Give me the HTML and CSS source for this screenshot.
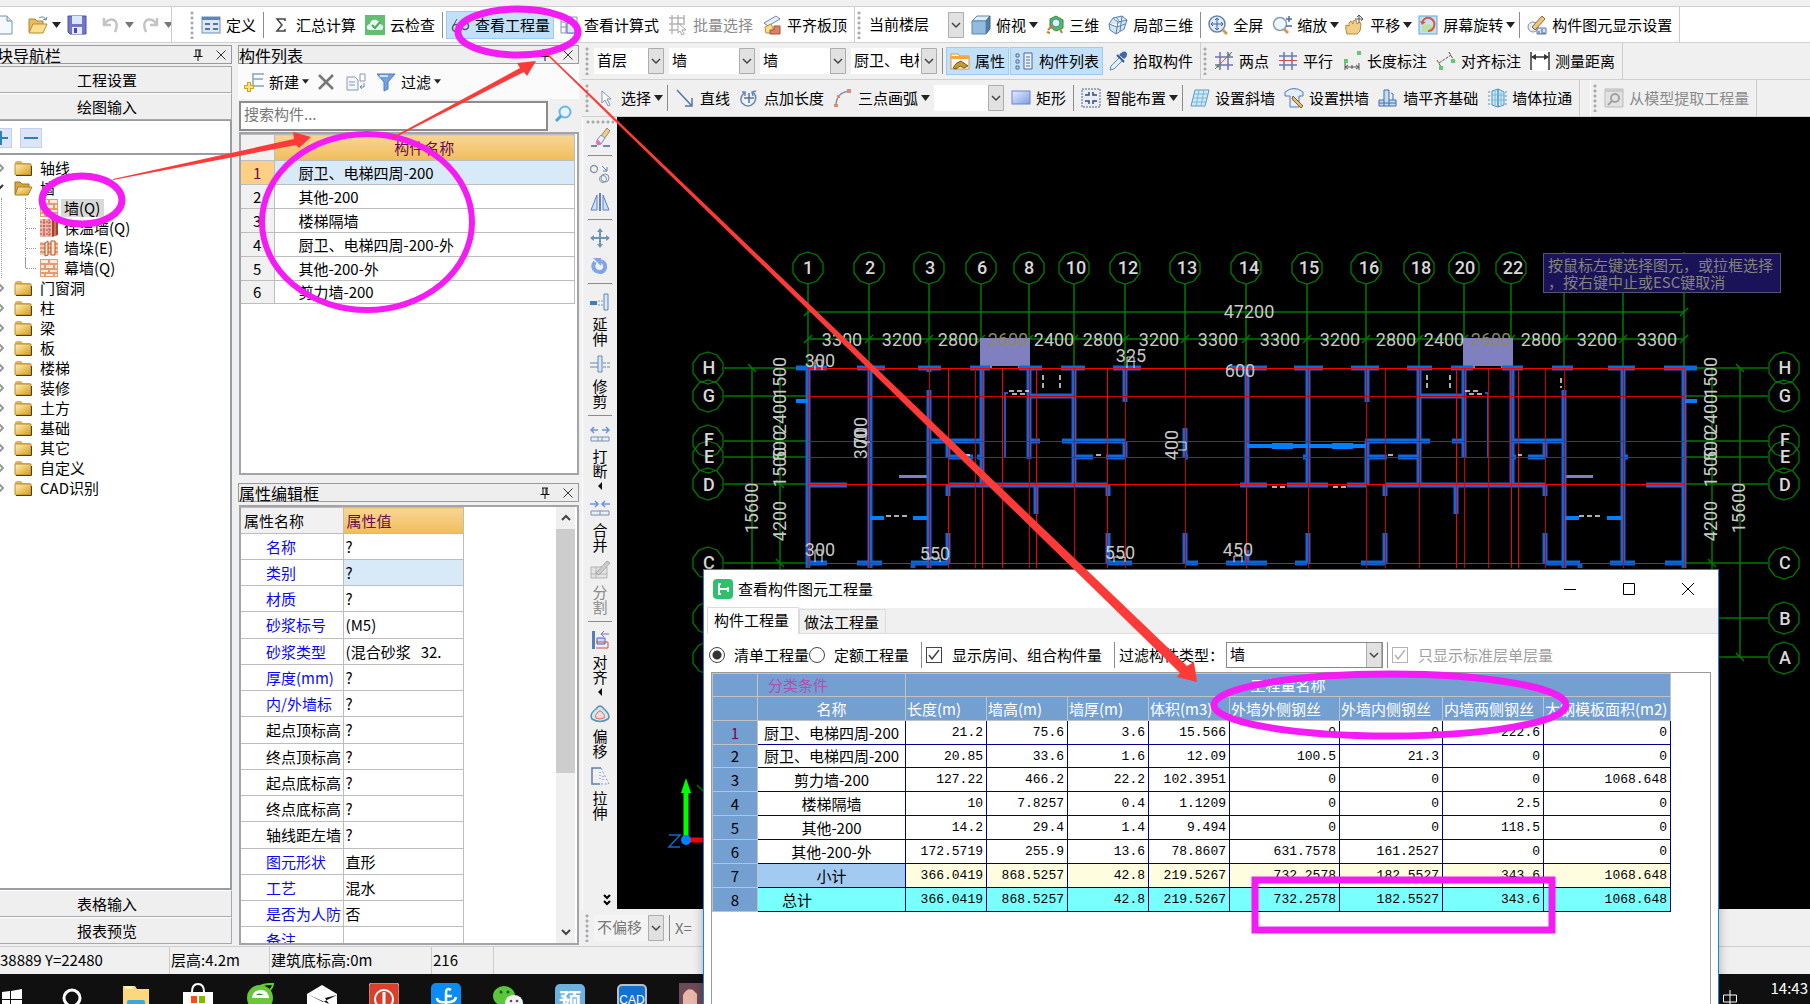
FILE: index.html
```html
<!DOCTYPE html>
<html lang="zh-CN">
<head>
  <meta charset="UTF-8" />
  <meta name="viewport" content="width=device-width, initial-scale=1.0" />
  <title>查看构件图元工程量</title>
  <link rel="stylesheet" href="styles.css">
</head>
<body>
  <!-- icon sprite -->
  <svg class="sprite" aria-hidden="true">
    <defs>
      <linearGradient id="gold" x1="0" y1="0" x2="1" y2="1"><stop offset="0" stop-color="#fff3b8"/><stop offset="1" stop-color="#d69a14"/></linearGradient>
      <linearGradient id="steel" x1="0" y1="0" x2="1" y2="1"><stop offset="0" stop-color="#e3eeff"/><stop offset="1" stop-color="#7f9fe0"/></linearGradient>
    </defs>
    <symbol id="folder" viewBox="0 0 18 16"><path d="M1 3q0-2 2-2h4l2 2h7v11H1z" fill="#e3b757"/><path d="M1 4h16v10q0 1-1 1H2q-1 0-1-1z" fill="url(#gold)" stroke="#b98a2c"/><path d="M2 15.500h15.500V6" stroke="#4d4020" fill="none"/></symbol>
    <symbol id="folder-open" viewBox="0 0 18 16"><path d="M1 14V2h5l2 2h7v3" fill="#d9a73c" stroke="#9a7424"/><path d="M4 7h14l-4 8H1z" fill="url(#gold)" stroke="#a87c28"/></symbol>
    <symbol id="brick" viewBox="0 0 18 18"><rect width="18" height="18" fill="#e59a72"/><path d="M1 1h7v3H1zM10 1h7v3h-7zM1 6h3v3H1zM6 6h7v3H6zM15 6h2v3h-2zM1 11h7v2H1zM10 11h7v2h-7zM1 15h3v2H1zM6 15h7v2H6zM15 15h2v2h-2z" fill="#fdebdc"/></symbol>
    <symbol id="brick-red" viewBox="0 0 18 18"><rect width="12" height="18" fill="#efb7aa"/><path d="M0 3h12M0 7h12M0 11h12M0 15h12M4 0v18M9 0v18" stroke="#b8483c" stroke-dasharray="2 1"/><path d="M12 0l6 2v14l-6 2z" fill="#a8412c"/><path d="M15 1v16" stroke="#e8a58e"/></symbol>
    <symbol id="brick-pier" viewBox="0 0 18 18"><path d="M0 3h18v13H0z" fill="#f6c9ac"/><path d="M0 5h18M0 9h18M0 13h18" stroke="#c8683c"/><path d="M5 4l3-2v14l-3 1zM11 2h4v14h-4z" fill="#fdebdc" stroke="#b5501f"/></symbol>
    <symbol id="pin" viewBox="0 0 12 12"><path d="M3 1h6M4 1v6M8 1v6M7 1v6M1.500 7.500h9M6 8v4" stroke="#111" fill="none"/></symbol>
    <symbol id="close" viewBox="0 0 12 12"><path d="M1.500 1.500l9 9M10.500 1.500l-9 9" stroke="#333" fill="none"/></symbol>
    <symbol id="caret" viewBox="0 0 9 6"><path d="M0 0h9L4.500 6z" fill="currentColor"/></symbol>
    <symbol id="doc" viewBox="0 0 20 20"><path d="M2 1h9l5 5v13H2z" fill="#f4f9ff" stroke="#7790ab"/><path d="M11 1v5h5" fill="#cfe0f5" stroke="#7790ab"/></symbol>
    <symbol id="open" viewBox="0 0 20 20"><path d="M1 17V4h6l2 2h6v3" fill="#e7bd60" stroke="#a9842f"/><path d="M5 9h14l-4 9H1z" fill="#ffdf8e" stroke="#b78b33"/><path d="M11 3q5-3 7 2m0 0l-3-1m3 1l1-3" stroke="#5b87b8" fill="none"/></symbol>
    <symbol id="save" viewBox="0 0 20 20"><path d="M1 1h18v18H3l-2-2z" fill="#7276c9" stroke="#4e50a3"/><path d="M5 1h10v8H5z" fill="#dbe6fb"/><path d="M5 12h10v7H5z" fill="#e8ecf5"/><path d="M7 13h3v5H7z" fill="#474a98"/></symbol>
    <symbol id="undo" viewBox="0 0 20 20"><path d="M3 3v7h7M3 10q4-7 10-5 5 3 1 12" stroke="#c4c4c4" stroke-width="2.500" fill="none"/></symbol>
    <symbol id="redo" viewBox="0 0 20 20"><path d="M17 3v7h-7M17 10q-4-7-10-5-5 3-1 12" stroke="#c4c4c4" stroke-width="2.500" fill="none"/></symbol>
    <symbol id="define" viewBox="0 0 20 20"><rect x="1" y="2" width="18" height="16" fill="#dce8f6" stroke="#6f8fb5"/><path d="M1 2h18v3H1z" fill="#5a87c2"/><path d="M4 9h5M4 14h5M12 9h5M12 14h5" stroke="#54779f" stroke-width="2"/></symbol>
    <symbol id="sum" viewBox="0 0 20 20"><path d="M14 6V4H6l5 6-5 6h8v-2" stroke="#444" stroke-width="1.500" fill="none"/></symbol>
    <symbol id="cloud" viewBox="0 0 20 20"><rect width="20" height="20" fill="#63bd72"/><path d="M4 15q-3-1-2-4 1-2 3-2 1-5 6-4 4 1 4 4 4 1 3 4 0 2-2 2z" fill="#e9f8ec"/><path d="M7 10l3 3 5-6" stroke="#49a95b" stroke-width="2" fill="none"/></symbol>
    <symbol id="glasses" viewBox="0 0 20 20"><circle cx="6" cy="13" r="3.500" fill="none" stroke="#555" stroke-width="1.500"/><circle cx="15" cy="11" r="3.500" fill="none" stroke="#555" stroke-width="1.500"/><path d="M3 11l4-7M18 9l-2-5" stroke="#555"/></symbol>
    <symbol id="sheet" viewBox="0 0 20 20"><path d="M2 2h16v16H2zM2 7h16M2 12h16M7 2v16M13 2v16" fill="#f5f7fb" stroke="#8895b5"/><path d="M8 8h8v10H8z" fill="#dfe7f7" stroke="#5f6fae"/></symbol>
    <symbol id="batch" viewBox="0 0 20 20"><path d="M1 3h16M1 9h16M1 15h9M4 0v19M10 0v10M16 0v8" stroke="#b5b5b5" fill="none" stroke-width="1.500"/><path d="M10 8l8 7-4 0 2 4-2 1-2-4-2 2z" fill="#fff" stroke="#a5a5a5"/></symbol>
    <symbol id="slab" viewBox="0 0 20 20"><path d="M2 8l12-7 4 3-12 7z" fill="#e8effa" stroke="#7186ad"/><path d="M3 12l6-3 2 4v5H4z" fill="#ffe08a" stroke="#b98a2c"/><path d="M8 19v-4h4v-4h6v8z" fill="#d9826b" stroke="#a4503c"/></symbol>
    <symbol id="cube" viewBox="0 0 20 20"><path d="M1 6l5-5h13l-4 5z" fill="#deeffa" stroke="#5f87a8"/><path d="M15 6l4-5v13l-4 5z" fill="#4d7faa" stroke="#44698a"/><path d="M1 6h14v13H1z" fill="#91bcdd" stroke="#5f87a8"/></symbol>
    <symbol id="view3d" viewBox="0 0 20 20"><path d="M6 4l6-3 7 4v8l-7 3-6-4z" fill="#4fbf63" stroke="#33873f"/><circle cx="12" cy="8" r="4" fill="#d8f3ff" stroke="#4b7f9c"/><path d="M9 10l-5 5M3 17l3 1M16 14l2 4" stroke="#c07c38" stroke-width="2"/></symbol>
    <symbol id="part3d" viewBox="0 0 20 20"><path d="M1 9l4-6 9-2 5 4-3 9-8 5-6-4zM5 3l5 4 9-2M10 7l-2 12M1 9l8 3 8-3M8 2l4 5M14 1l-2 15" fill="#d3e7f8" stroke="#5582ad"/></symbol>
    <symbol id="fullscreen" viewBox="0 0 20 20"><circle cx="9" cy="9" r="8" fill="#dfeafb" stroke="#6882ad" stroke-width="1.500"/><path d="M9 3v12M3 9h12M7 5l2-2 2 2M7 13l2 2 2-2M5 7L3 9l2 2M13 7l2 2-2 2" stroke="#41619c" fill="none"/><path d="M15 15l4 4" stroke="#d69a52" stroke-width="3"/></symbol>
    <symbol id="zoom" viewBox="0 0 20 20"><circle cx="8" cy="9" r="6.500" fill="#edf5ff" stroke="#8d9bb3" stroke-width="1.500"/><path d="M12 14l4 4" stroke="#d69a52" stroke-width="3"/><path d="M17 1v6M14 4h6M14 11h6" stroke="#4b6ba5" stroke-width="1.500"/></symbol>
    <symbol id="hand" viewBox="0 0 20 20"><path d="M2 19q-2-5-1-9l3 1V8l2-2 2 3V6l3-1 1 4 3-2 1 2-1 7-3 3z" fill="#efcf88" stroke="#b48a3e"/><path d="M14 0v8M10 4h8M12 2l2-2 2 2M16 2l2 2-2 2" stroke="#555" fill="none"/></symbol>
    <symbol id="rotate-screen" viewBox="0 0 20 20"><rect x="1" y="1" width="18" height="18" fill="#bfe2f5" stroke="#64a7d3"/><path d="M4 11l5-2 7 2v6H4z" fill="#bfe19b"/><path d="M4 8q2-6 8-5 6 3 4 9-2 4-6 4" stroke="#e35248" stroke-width="2" fill="none"/><path d="M2 6l2 4 4-3z" fill="#e35248"/></symbol>
    <symbol id="display" viewBox="0 0 20 20"><circle cx="6" cy="12" r="5" fill="#e7edf8" stroke="#7f90b0"/><path d="M5 12L15 1l3 3L8 15z" fill="#f0c77c" stroke="#8a6530"/><path d="M10 19v-6h9v6z" fill="#d7e3f5" stroke="#5d76a5"/><path d="M12 19v-3M15 19v-5M17 19v-2" stroke="#3f5f98"/></symbol>
    <symbol id="props" viewBox="0 0 20 20"><path d="M1 3h7l2 2h9v13H1z" fill="#fff" stroke="#dc9530"/><path d="M1 5h18v3H1z" fill="#f5a742"/><path d="M3 17q3-6 8-7l7 5-4 2-4-2-4 3z" fill="#c99a34" stroke="#6f5520"/></symbol>
    <symbol id="list" viewBox="0 0 20 20"><path d="M2 3h3v3H2zM2 9h3v3H2zM2 15h3v3H2z" fill="none" stroke="#556b92"/><path d="M10 2h8v16h-8z" fill="#eef4ff" stroke="#4a64a0"/><path d="M12 6h4M12 9h4M12 12h4M12 15h4" stroke="#4a64a0"/></symbol>
    <symbol id="picker" viewBox="0 0 20 20"><path d="M11 4q4-5 7-3 3 3-2 7z" fill="#3f6aa6"/><path d="M9 4l7 7" stroke="#2e5490" stroke-width="2"/><path d="M11 7l-8 8-1 4 4-1 8-8z" fill="#dff0ff" stroke="#5d86b3"/></symbol>
    <symbol id="axis2" viewBox="0 0 20 20"><path d="M6 1v18M14 1v18M1 6h18M1 14h18" stroke="#6f74b4" stroke-width="1.500"/><path d="M1 18L18 1" stroke="#d24a42"/><circle cx="4" cy="15" r="1.500" fill="#2fa344"/><circle cx="15" cy="4" r="1.500" fill="#2fa344"/></symbol>
    <symbol id="axisp" viewBox="0 0 20 20"><path d="M6 1v18M14 1v18M1 5h18M1 14h18" stroke="#6f74b4" stroke-width="1.500"/><path d="M1 9.500h18" stroke="#d24a42"/></symbol>
    <symbol id="dimlen" viewBox="0 0 20 20"><path d="M3 12v7M17 12v7M3 16h14M6 14l-3 2 3 2M14 14l3 2-3 2M10 14v4" stroke="#555" fill="none"/><path d="M2 8h4v4H2zM15 0h4v4h-4z" fill="#63ca6b"/></symbol>
    <symbol id="dimalign" viewBox="0 0 20 20"><path d="M1 9l4 7M13 1l4 7M3 12L15 4" stroke="#555" stroke-dasharray="3 1" fill="none"/><path d="M3 15h4v4H3zM15 8h4v4h-4z" fill="#63ca6b"/></symbol>
    <symbol id="measure" viewBox="0 0 20 20"><path d="M0 0h20v20H0z" fill="#fff"/><path d="M1 1v18M19 1v18M2 6h16" stroke="#333" stroke-width="1.500"/><path d="M1 6l5-3v6zM19 6l-5-3v6z" fill="#333"/></symbol>
    <symbol id="cursor" viewBox="0 0 20 20"><path d="M6 3v12l3-3 3 6 2-1-3-6h4z" fill="#fff" stroke="#8093b3"/></symbol>
    <symbol id="line" viewBox="0 0 20 20"><path d="M2 2l14 15M17 10v8h-7" stroke="#5674a8" stroke-width="1.500" fill="none"/></symbol>
    <symbol id="ptlen" viewBox="0 0 20 20"><path d="M5 5q-5 5-2 10 6 6 12 0 4-6-1-11M3 4l3 0v4M17 3l-4 1 1 4" stroke="#6787b5" stroke-width="1.500" fill="none"/><path d="M10 5v10M5 10h10" stroke="#5674a8" stroke-width="1.500"/></symbol>
    <symbol id="arc" viewBox="0 0 20 20"><path d="M3 18Q3 4 17 3" stroke="#7d93b9" stroke-width="1.500" fill="none"/><path d="M1 16h4v3H1zM4 7h3v3H4zM14 1h4v4h-4z" fill="#e28a6f"/></symbol>
    <symbol id="rect" viewBox="0 0 20 20"><rect x="1" y="3" width="18" height="13" fill="url(#steel)" stroke="#6d83d0"/></symbol>
    <symbol id="smart" viewBox="0 0 20 20"><rect x="1" y="1" width="18" height="18" fill="#e9edf6" stroke="#5b6480" stroke-dasharray="2 1"/><path d="M4 7h4V4M16 7h-4V4M4 13h4v3M16 13h-4v3" stroke="#324a78" stroke-width="1.500" fill="none"/></symbol>
    <symbol id="slant" viewBox="0 0 20 20"><path d="M5 2h14l-4 16H1z" fill="#cdeafa" stroke="#5a97bf"/><path d="M4 6h14M3 10h14M2 14h14M9 2L6 18M14 2l-3 16" stroke="#7ab5d8"/></symbol>
    <symbol id="arch" viewBox="0 0 20 20"><path d="M1 8V4q9-7 18 0v4h-4v11H6V8z" fill="#e4effb" stroke="#4c7ab8"/><path d="M9 8l10 10-2 2L8 11z" fill="#e7bd70" stroke="#77602e"/></symbol>
    <symbol id="found" viewBox="0 0 20 20"><path d="M6 2h5v10h7v6H1v-6h5z" fill="#c5dcf5" stroke="#3f6eae"/><path d="M13 5l2 1v6M1 15h17M6 12v6M11 12v6" stroke="#3f6eae" fill="none"/></symbol>
    <symbol id="through" viewBox="0 0 20 20"><path d="M5 3l6-2v18l-6-2zM11 1l6 3v13l-6 2z" fill="#cdeafa" stroke="#4b91c4"/><path d="M2 3v14M19 3v14" stroke="#4b91c4" stroke-dasharray="2 2"/><path d="M8 3v14M14 4v13M5 7h12M5 12h12" stroke="#7ab5d8"/></symbol>
    <symbol id="model" viewBox="0 0 20 20"><path d="M1 1h18v18H1z" fill="#e2e2e2" stroke="#bbb"/><path d="M1 1h18v3H1z" fill="#c9c9c9"/><circle cx="11" cy="10" r="4" fill="none" stroke="#a2a2a2" stroke-width="2"/><path d="M8 13l-4 4" stroke="#a2a2a2" stroke-width="2"/></symbol>
    <symbol id="new" viewBox="0 0 20 20"><path d="M9 1v13M9 2h11M9 7h10M9 14h11" stroke="#8ba2c4" stroke-width="1.500" fill="none"/><path d="M5 10v10M0 15h10" stroke="#d2a128" stroke-width="4"/><path d="M5 11v8M1 15h8" stroke="#ffe27a" stroke-width="2"/></symbol>
    <symbol id="del" viewBox="0 0 20 20"><path d="M3 3l14 14M17 3L3 17" stroke="#777" stroke-width="2.500"/></symbol>
    <symbol id="copydoc" viewBox="0 0 20 20"><path d="M1 5h8l3 3v10H1z" fill="#f3f6fb" stroke="#8898b5"/><path d="M3 10h6M3 13h6" stroke="#8898b5"/><path d="M14 2h5v7h-5z" fill="#fff" stroke="#8898b5"/><path d="M18 11v4h-4m2-2l-2 2 2 2" stroke="#6a84c9" fill="none"/></symbol>
    <symbol id="funnel" viewBox="0 0 20 20"><path d="M1 2h18l-7 8v7l-4 2v-9z" fill="#74a0de" stroke="#4b7cc2"/><path d="M4 4h8" stroke="#cfe2fb" stroke-width="2"/></symbol>
    <symbol id="search" viewBox="0 0 20 20"><circle cx="12" cy="8" r="5.500" fill="#e6f4ff" stroke="#6cb4e8" stroke-width="2"/><path d="M8 12l-5 5" stroke="#4ba3e3" stroke-width="3"/></symbol>
    <symbol id="eraser" viewBox="0 0 20 20"><path d="M11 8l6-8 3 3-6 8z" fill="#f2cf7b" stroke="#94886c"/><path d="M7 12l4-5 4 3-4 6q-4 1-4-4z" fill="#e9eefb" stroke="#7c8fb5"/><path d="M7 12q3 0 4 4-2 2-4 1-2-2 0-5" fill="#e573b6"/><path d="M1 18h6M13 18h7" stroke="#6d8bb0" stroke-width="2"/></symbol>
    <symbol id="copy" viewBox="0 0 20 20"><circle cx="4" cy="5" r="3.500" fill="none" stroke="#8295b0" stroke-width="1.300"/><circle cx="13" cy="15" r="3.500" fill="none" stroke="#8295b0"/><circle cx="15" cy="14" r="4" fill="none" stroke="#8295b0"/><path d="M12 2l5 5m0-4v4h-4" stroke="#5d82ad" fill="none"/></symbol>
    <symbol id="mirror" viewBox="0 0 20 20"><path d="M1 18L7 3v15zM19 18L13 3v15z" fill="#cfe0ff" stroke="#5d7fc0"/><path d="M10 1v18" stroke="#5d7fc0" stroke-width="2"/></symbol>
    <symbol id="move" viewBox="0 0 20 20"><path d="M10 2v16M2 10h16" stroke="#7192b7" stroke-width="2"/><path d="M7 4l3-4 3 4zM7 16l3 4 3-4zM4 7l-4 3 4 3zM16 7l4 3-4 3z" fill="#7192b7"/></symbol>
    <symbol id="rotate" viewBox="0 0 20 20"><path d="M5 6q-4 5 1 9 7 3 9-3 1-5-4-7" stroke="#7fa5ec" stroke-width="4" fill="none"/><path d="M3 2h8v8z" fill="#7fa5ec"/></symbol>
    <symbol id="extend" viewBox="0 0 20 20"><path d="M0 9h7v4H0z" fill="#3e7bc0"/><path d="M8 9h6M8 13h6" stroke="#7d98ba" stroke-dasharray="2 1"/><path d="M14 2h4v16h-4z" fill="#d9e8fa" stroke="#6587b2"/></symbol>
    <symbol id="trim" viewBox="0 0 20 20"><path d="M0 9h8M0 13h8" stroke="#6587b2"/><path d="M8 2h4v16H8z" fill="#d9e8fa" stroke="#6587b2"/><path d="M13 9h7M13 13h7" stroke="#6587b2" stroke-dasharray="3 1"/></symbol>
    <symbol id="break" viewBox="0 0 20 20"><path d="M1 6h7M19 6h-7M4 3L1 6l3 3M16 3l3 3-3 3" stroke="#6d92dd" stroke-width="1.500" fill="none"/><path d="M1 13h18v4H1zM8 13v4M12 13v4" fill="#e8f0fa" stroke="#7a91ae"/></symbol>
    <symbol id="merge" viewBox="0 0 20 20"><path d="M0 6h7M20 6h-7M5 3l3 3-3 3M15 3l-3 3 3 3" stroke="#6d92dd" stroke-width="1.500" fill="none"/><path d="M1 13h18v4H1zM10 13v4" fill="#e8f0fa" stroke="#7a91ae"/></symbol>
    <symbol id="split" viewBox="0 0 20 20"><path d="M1 7h16v11H1zM1 14h16M6 7v11" fill="#e4e4e4" stroke="#b3b3b3"/><path d="M6 13L17 1l3 2L9 15z" fill="#ccc" stroke="#a8a8a8"/></symbol>
    <symbol id="align" viewBox="0 0 20 20"><path d="M2 1h3v18H2z" fill="#5680b5"/><path d="M7 8h8v6H7z" fill="#cfdcff" stroke="#4a5fd0"/><path d="M6 12h12v6H6" fill="none" stroke="#d2504c"/><path d="M19 4h-8m3-3l-3 3 3 3" stroke="#7a6fc4" fill="none"/></symbol>
    <symbol id="offset" viewBox="0 0 20 20"><path d="M6 5q4-6 8 0 7 6 4 10-8 5-16 0-3-5 4-10z" fill="#cfe8f5" stroke="#5b8fb5" stroke-width="1.500"/><path d="M8 8q2-3 4 0 4 4 2 6-4 2-8 0-2-2 2-6z" fill="#ffd9d2" stroke="#e0665c"/></symbol>
    <symbol id="stretch" viewBox="0 0 20 20"><path d="M11 2H2v16h8" fill="none" stroke="#5d7fb0" stroke-width="1.500"/><path d="M11 2l8 16H10" stroke="#7b9bd0" fill="none" stroke-dasharray="2 2"/><path d="M10 6v9M13 10v6" stroke="#5d7fb0" stroke-dasharray="1 2"/></symbol>
    <symbol id="bubble" viewBox="-17 -17 34 34"><path d="M0-16L9-13 15-5V5L9 13 0 16-9 13-15 5V-5L-9-13z" fill="none" stroke="#007a00" stroke-width="1.300"/></symbol>
  </svg>

  <div class="app">
    <header class="topbar">
      <div class="tb quick">
        <button class="mini" aria-label="新建工程"><svg class="ic"><use href="#doc"/></svg></button>
        <button class="mini" aria-label="打开"><svg class="ic"><use href="#open"/></svg><svg class="caret"><use href="#caret"/></svg></button>
        <button class="mini" aria-label="保存"><svg class="ic"><use href="#save"/></svg></button>
        <i class="sep"></i>
        <button class="mini" aria-label="撤销"><svg class="ic"><use href="#undo"/></svg><svg class="caret dim-caret"><use href="#caret"/></svg></button>
        <button class="mini" aria-label="恢复"><svg class="ic"><use href="#redo"/></svg><svg class="caret dim-caret"><use href="#caret"/></svg></button>
      </div>
      <div class="tb">
        <i class="grip"></i>
        <button><svg class="ic"><use href="#define"/></svg>定义</button>
        <i class="sep"></i>
        <button><svg class="ic"><use href="#sum"/></svg>汇总计算</button>
        <button><svg class="ic"><use href="#cloud"/></svg>云检查</button>
        <i class="sep"></i>
        <button class="on"><svg class="ic"><use href="#glasses"/></svg>查看工程量</button>
        <button><svg class="ic"><use href="#sheet"/></svg>查看计算式</button>
        <button disabled><svg class="ic"><use href="#batch"/></svg>批量选择</button>
        <button><svg class="ic"><use href="#slab"/></svg>平齐板顶</button>
      </div>
      <div class="tb">
        <i class="grip"></i>
        <select class="combo w98" aria-label="显示楼层"><option>当前楼层</option></select>
        <button><svg class="ic"><use href="#cube"/></svg>俯视<svg class="caret"><use href="#caret"/></svg></button>
        <button><svg class="ic"><use href="#view3d"/></svg>三维</button>
        <button><svg class="ic"><use href="#part3d"/></svg>局部三维</button>
        <i class="sep"></i>
        <button><svg class="ic"><use href="#fullscreen"/></svg>全屏</button>
        <button><svg class="ic"><use href="#zoom"/></svg>缩放<svg class="caret"><use href="#caret"/></svg></button>
        <button><svg class="ic"><use href="#hand"/></svg>平移<svg class="caret"><use href="#caret"/></svg></button>
        <button><svg class="ic"><use href="#rotate-screen"/></svg>屏幕旋转<svg class="caret"><use href="#caret"/></svg></button>
        <i class="sep"></i>
        <button><svg class="ic"><use href="#display"/></svg>构件图元显示设置</button>
      </div>
    </header>

    <div class="work">
      <aside class="nav">
        <div class="panel-title">块导航栏<button aria-label="固定"><svg><use href="#pin"/></svg></button><button aria-label="关闭"><svg><use href="#close"/></svg></button></div>
        <button class="bar-btn first">工程设置</button>
        <button class="bar-btn">绘图输入</button>
        <div class="nav-body">
          <div class="nav-tools"><button aria-label="展开"><svg viewBox="0 0 20 18"><path d="M3 9h14M10 2v14"/></svg></button><button aria-label="折叠"><svg viewBox="0 0 20 18"><path d="M3 9h14"/></svg></button></div>
          <ul class="tree">
            <li><a href="#"><svg class="chev" viewBox="0 0 10 10"><path d="M5 1l4 4-4 4"/></svg><svg class="fold"><use href="#folder"/></svg>轴线</a></li>
            <li><a href="#"><svg class="chev open" viewBox="0 0 10 10"><path d="M3 8l6-6"/></svg><svg class="fold"><use href="#folder-open"/></svg>墙</a>
              <ul>
                <li><a href="#"><svg class="brick"><use href="#brick"/></svg><span class="sel">墙(Q)</span></a></li>
                <li><a href="#"><svg class="brick"><use href="#brick-red"/></svg><span>保温墙(Q)</span></a></li>
                <li><a href="#"><svg class="brick"><use href="#brick-pier"/></svg><span>墙垛(E)</span></a></li>
                <li><a href="#"><svg class="brick"><use href="#brick"/></svg><span>幕墙(Q)</span></a></li>
              </ul>
            </li>
            <li><a href="#"><svg class="chev" viewBox="0 0 10 10"><path d="M5 1l4 4-4 4"/></svg><svg class="fold"><use href="#folder"/></svg>门窗洞</a></li>
            <li><a href="#"><svg class="chev" viewBox="0 0 10 10"><path d="M5 1l4 4-4 4"/></svg><svg class="fold"><use href="#folder"/></svg>柱</a></li>
            <li><a href="#"><svg class="chev" viewBox="0 0 10 10"><path d="M5 1l4 4-4 4"/></svg><svg class="fold"><use href="#folder"/></svg>梁</a></li>
            <li><a href="#"><svg class="chev" viewBox="0 0 10 10"><path d="M5 1l4 4-4 4"/></svg><svg class="fold"><use href="#folder"/></svg>板</a></li>
            <li><a href="#"><svg class="chev" viewBox="0 0 10 10"><path d="M5 1l4 4-4 4"/></svg><svg class="fold"><use href="#folder"/></svg>楼梯</a></li>
            <li><a href="#"><svg class="chev" viewBox="0 0 10 10"><path d="M5 1l4 4-4 4"/></svg><svg class="fold"><use href="#folder"/></svg>装修</a></li>
            <li><a href="#"><svg class="chev" viewBox="0 0 10 10"><path d="M5 1l4 4-4 4"/></svg><svg class="fold"><use href="#folder"/></svg>土方</a></li>
            <li><a href="#"><svg class="chev" viewBox="0 0 10 10"><path d="M5 1l4 4-4 4"/></svg><svg class="fold"><use href="#folder"/></svg>基础</a></li>
            <li><a href="#"><svg class="chev" viewBox="0 0 10 10"><path d="M5 1l4 4-4 4"/></svg><svg class="fold"><use href="#folder"/></svg>其它</a></li>
            <li><a href="#"><svg class="chev" viewBox="0 0 10 10"><path d="M5 1l4 4-4 4"/></svg><svg class="fold"><use href="#folder"/></svg>自定义</a></li>
            <li><a href="#"><svg class="chev" viewBox="0 0 10 10"><path d="M5 1l4 4-4 4"/></svg><svg class="fold"><use href="#folder"/></svg>CAD识别</a></li>
          </ul>
        </div>
        <button class="bar-btn">表格输入</button>
        <button class="bar-btn">报表预览</button>
      </aside>

      <section class="mid">
        <div class="panel-title">构件列表<button aria-label="固定"><svg><use href="#pin"/></svg></button><button aria-label="关闭"><svg><use href="#close"/></svg></button></div>
        <div class="comp-tools">
          <button><svg class="ic"><use href="#new"/></svg>新建<svg class="caret sm"><use href="#caret"/></svg></button>
          <button aria-label="删除"><svg class="ic"><use href="#del"/></svg></button>
          <button aria-label="复制"><svg class="ic"><use href="#copydoc"/></svg></button>
          <button><svg class="ic"><use href="#funnel"/></svg>过滤<svg class="caret sm"><use href="#caret"/></svg></button>
        </div>
        <div class="search"><input type="text" placeholder="搜索构件..." aria-label="搜索构件"><button aria-label="搜索"><svg class="ic"><use href="#search"/></svg></button></div>
        <div class="comp-box">
          <table class="comp">
            <thead><tr><th></th><th class="gold">构件名称</th></tr></thead>
            <tbody>
              <tr class="cur"><th>1</th><td>厨卫、电梯四周-200</td></tr>
              <tr><th>2</th><td>其他-200</td></tr>
              <tr><th>3</th><td>楼梯隔墙</td></tr>
              <tr><th>4</th><td>厨卫、电梯四周-200-外</td></tr>
              <tr><th>5</th><td>其他-200-外</td></tr>
              <tr><th>6</th><td>剪力墙-200</td></tr>
            </tbody>
          </table>
        </div>
        <div class="panel-title second">属性编辑框<button aria-label="固定"><svg><use href="#pin"/></svg></button><button aria-label="关闭"><svg><use href="#close"/></svg></button></div>
        <div class="prop-box">
          <table class="props">
            <thead><tr><th>属性名称</th><th class="gold">属性值</th></tr></thead>
            <tbody>
              <tr><th>名称</th><td>?</td></tr>
              <tr><th>类别</th><td class="hl">?</td></tr>
              <tr><th>材质</th><td>?</td></tr>
              <tr><th>砂浆标号</th><td>(M5)</td></tr>
              <tr><th>砂浆类型</th><td>(混合砂浆&nbsp;&nbsp; 32.</td></tr>
              <tr><th>厚度(mm)</th><td>?</td></tr>
              <tr><th>内/外墙标</th><td>?</td></tr>
              <tr class="blk"><th>起点顶标高</th><td>?</td></tr>
              <tr class="blk"><th>终点顶标高</th><td>?</td></tr>
              <tr class="blk"><th>起点底标高</th><td>?</td></tr>
              <tr class="blk"><th>终点底标高</th><td>?</td></tr>
              <tr class="blk"><th>轴线距左墙</th><td>?</td></tr>
              <tr><th>图元形状</th><td>直形</td></tr>
              <tr><th>工艺</th><td>混水</td></tr>
              <tr><th>是否为人防</th><td>否</td></tr>
              <tr><th>备注</th><td></td></tr>
            </tbody>
          </table>
          <div class="scroll">
            <svg viewBox="0 0 10 10"><path d="M1 7l4-4 4 4"/></svg>
            <i class="thumb"></i>
            <svg viewBox="0 0 10 10"><path d="M1 3l4 4 4-4"/></svg>
          </div>
        </div>
      </section>

      <main class="right">
        <div class="bars">
          <div class="tb">
            <i class="grip"></i>
            <select class="combo w70" aria-label="楼层"><option>首层</option></select>
            <select class="combo w86" aria-label="构件大类"><option>墙</option></select>
            <select class="combo w86" aria-label="构件类型"><option>墙</option></select>
            <select class="combo w86" aria-label="构件"><option>厨卫、电梯四周-200</option></select>
            <i class="sep"></i>
            <button class="on"><svg class="ic"><use href="#props"/></svg>属性</button>
            <button class="on"><svg class="ic"><use href="#list"/></svg>构件列表</button>
            <button><svg class="ic"><use href="#picker"/></svg>拾取构件</button>
          </div>
          <div class="tb">
            <i class="grip"></i>
            <button><svg class="ic"><use href="#axis2"/></svg>两点</button>
            <button><svg class="ic"><use href="#axisp"/></svg>平行</button>
            <button><svg class="ic"><use href="#dimlen"/></svg>长度标注</button>
            <button><svg class="ic"><use href="#dimalign"/></svg>对齐标注</button>
            <button><svg class="ic"><use href="#measure"/></svg>测量距离</button>
          </div>
        </div>
        <div class="bars">
          <div class="tb">
            <i class="grip"></i>
            <button><svg class="ic"><use href="#cursor"/></svg>选择<svg class="caret"><use href="#caret"/></svg></button>
            <i class="sep"></i>
            <button><svg class="ic"><use href="#line"/></svg>直线</button>
            <button><svg class="ic"><use href="#ptlen"/></svg>点加长度</button>
            <button><svg class="ic"><use href="#arc"/></svg>三点画弧<svg class="caret"><use href="#caret"/></svg></button>
            <select class="combo w70" aria-label="弧参数"><option></option></select>
            <button><svg class="ic"><use href="#rect"/></svg>矩形</button>
            <i class="sep"></i>
            <button><svg class="ic"><use href="#smart"/></svg>智能布置<svg class="caret"><use href="#caret"/></svg></button>
            <i class="sep"></i>
            <button><svg class="ic"><use href="#slant"/></svg>设置斜墙</button>
            <button><svg class="ic"><use href="#arch"/></svg>设置拱墙</button>
            <button><svg class="ic"><use href="#found"/></svg>墙平齐基础</button>
            <button><svg class="ic"><use href="#through"/></svg>墙体拉通</button>
          </div>
          <div class="tb apart">
            <i class="grip"></i>
            <button disabled><svg class="ic"><use href="#model"/></svg>从模型提取工程量</button>
          </div>
        </div>

        <div class="stage">
          <div class="vbar">
            <i class="grip-h"></i>
            <button aria-label="删除图元"><svg class="ic"><use href="#eraser"/></svg></button>
            <i class="hsep"></i>
            <button aria-label="复制图元"><svg class="ic"><use href="#copy"/></svg></button>
            <button aria-label="镜像"><svg class="ic"><use href="#mirror"/></svg></button>
            <i class="hsep"></i>
            <button aria-label="移动"><svg class="ic"><use href="#move"/></svg></button>
            <button aria-label="旋转"><svg class="ic"><use href="#rotate"/></svg></button>
            <i class="hsep"></i>
            <button><svg class="ic"><use href="#extend"/></svg><span>延伸</span></button>
            <button><svg class="ic"><use href="#trim"/></svg><span>修剪</span></button>
            <i class="hsep"></i>
            <button><svg class="ic"><use href="#break"/></svg><span>打断</span><i class="tri"></i></button>
            <button><svg class="ic"><use href="#merge"/></svg><span>合并</span></button>
            <button disabled><svg class="ic"><use href="#split"/></svg><span>分割</span></button>
            <i class="hsep"></i>
            <button><svg class="ic"><use href="#align"/></svg><span>对齐</span><i class="tri"></i></button>
            <button><svg class="ic"><use href="#offset"/></svg><span>偏移</span></button>
            <button><svg class="ic"><use href="#stretch"/></svg><span>拉伸</span></button>
            <svg class="more" viewBox="0 0 8 12"><path d="M1 1l3 3 3-3M1 7l3 3 3-3"/></svg>
          </div>
          <div class="canvas">
            <svg class="plan" viewBox="617 117 1193 792" preserveAspectRatio="xMinYMin slice">
              <!-- axis lines and dimension lines -->
              <path class="axis" d="M808 284V368M869 284V368M929 284V368M981 284V368M1029 284V368M1074 284V368M1125 284V368M1185 284V368M1246 284V368M1307 284V368M1366 284V368M1419 284V368M1464 284V368M1511 284V368M1564 252V368M1623 252V368M1684 252V368M808 312H1684M808 339H1684M724 368H808M724 396H808M724 441H808M724 457H808M724 484H808M724 563H808M1684 368H1768M1684 396H1768M1684 441H1768M1684 457H1768M1684 484H1768M1684 563H1768M1684 618H1768M1684 657H1768M752 368V570M780 368V570M1712 368V657M1740 368V657"/>
              <path class="axis" d="M804 316l8-8M1680 316l8-8M804 343l8-8M865 343l8-8M925 343l8-8M977 343l8-8M1025 343l8-8M1070 343l8-8M1121 343l8-8M1181 343l8-8M1242 343l8-8M1303 343l8-8M1362 343l8-8M1415 343l8-8M1460 343l8-8M1507 343l8-8M1560 343l8-8M1619 343l8-8M1680 343l8-8M748 364l8 8M776 480l8 8M776 559l8 8M1736 364l8 8M1708 559l8 8M1736 653l8 8M697 785l8 8"/>
              <g>
                <use href="#bubble" x="791" y="251" width="34" height="34"/><use href="#bubble" x="852" y="251" width="34" height="34"/><use href="#bubble" x="912" y="251" width="34" height="34"/><use href="#bubble" x="964" y="251" width="34" height="34"/><use href="#bubble" x="1012" y="251" width="34" height="34"/><use href="#bubble" x="1057" y="251" width="34" height="34"/><use href="#bubble" x="1108" y="251" width="34" height="34"/><use href="#bubble" x="1168" y="251" width="34" height="34"/><use href="#bubble" x="1229" y="251" width="34" height="34"/><use href="#bubble" x="1290" y="251" width="34" height="34"/><use href="#bubble" x="1349" y="251" width="34" height="34"/><use href="#bubble" x="1402" y="251" width="34" height="34"/><use href="#bubble" x="1447" y="251" width="34" height="34"/><use href="#bubble" x="1494" y="251" width="34" height="34"/>
                <use href="#bubble" x="691" y="351" width="34" height="34"/><use href="#bubble" x="691" y="379" width="34" height="34"/><use href="#bubble" x="691" y="424" width="34" height="34"/><use href="#bubble" x="691" y="440" width="34" height="34"/><use href="#bubble" x="691" y="467" width="34" height="34"/><use href="#bubble" x="691" y="546" width="34" height="34"/><use href="#bubble" x="691" y="601" width="34" height="34"/><use href="#bubble" x="691" y="641" width="34" height="34"/>
                <use href="#bubble" x="1767" y="351" width="34" height="34"/><use href="#bubble" x="1767" y="379" width="34" height="34"/><use href="#bubble" x="1767" y="424" width="34" height="34"/><use href="#bubble" x="1767" y="440" width="34" height="34"/><use href="#bubble" x="1767" y="467" width="34" height="34"/><use href="#bubble" x="1767" y="546" width="34" height="34"/><use href="#bubble" x="1767" y="601" width="34" height="34"/><use href="#bubble" x="1767" y="641" width="34" height="34"/>
              </g>
              <!-- stairs -->
              <path class="stair" d="M980 338h50v30h-12v-2h-26v2h-12zM1463 338h50v30h-12v-2h-26v2h-12zM899 475h29v3h-29zM1564 475h29v3h-29z"/>
              <!-- walls -->
              <path class="wall" d="M808 368V568M870 368V568M929 390V568M929 368V372M948 441V457M948 484V496M948 533V563M982 368V484M1029 368V459M1074 368V484M1036 484V514M1108 484V496M1108 533V563M1125 368V402M1125 441V457M1185 428V458M1185 533V563M1247 368V484M1247 550V563M1308 368V484M1308 533V563M1367 368V402M1367 441V484M1385 484V496M1385 533V563M1419 368V484M1456 484V514M1464 368V458M1512 368V484M1545 441V457M1545 484V496M1545 533V563M1564 390V568M1623 368V563M1684 368V568M1580 563V568M913 563V568"/>
              <path class="wall" d="M796 368H827M857 368H885M918 368H941M970 368H990M1019 368H1042M1061 368H1085M1113 368H1141M1229 368H1267M1294 368H1323M1351 368H1379M1407 368H1432M1451 368H1473M1502 368H1523M1552 368H1573M1608 368H1635M1664 368H1697M1029 396H1074M1419 396H1464M929 441H981M1029 441H1040M1062 441H1125M1365 441H1430M1452 441H1463M1512 441H1563M948 457H973M977 457H981M1074 457H1093M1106 457H1125M1185 457H1188M1303 457H1308M1366 457H1387M1398 457H1419M1511 457H1516M1528 457H1545M1623 457H1628M808 485H847M948 485H1107M1240 485H1267M1287 485H1328M1347 485H1367M1385 485H1545M1646 485H1684M808 563H827M857 563H882M911 563H948M1108 563H1132M1185 563H1198M1226 563H1267M1295 563H1307M1361 563H1385M1545 563H1580M1610 563H1635M1665 563H1684"/>
              <path class="curtain" d="M870 518H884M913 518H928M1564 518H1579M1607 518H1622M796 401H808M1684 401H1697M1247 446H1366"/>
              <path class="curtain thick" d="M1272 446H1293M1332 446H1353"/>
              <path class="thin-wall" d="M1005 457V393H1008M1488 457V393H1485"/>
              <!-- slab reference lines -->
              <path class="ref dark" d="M869 368V568M929 368V568M975 368V568M1029 368V568M1074 368V568M1125 368V568M1185 368V568M1308 368V568M1366 368V568M1385 368V568M1419 368V568M1464 368V568M1488 368V568M1545 368V568M1564 368V568M1623 368V568M808 396H1684M808 441H1684M808 457H1684"/>
              <path class="ref" d="M808 368V568M948 368V568M982 368V568M1002 368V568M1036 368V568M1107 368V568M1246 368V568M1456 368V568M1511 368V568M1518 368V568M1684 368V568M808 368H1684M808 484H1684M808 563H1684"/>
              <!-- openings -->
              <path class="opening" d="M886 516H908M1579 516H1602M1009 391H1029M1012 394H1028M1465 391H1481M1469 394H1485M1043 375V390M1060 375V390M1427 375V390M1450 375V390M1561 378V388M965 455H971M1096 455H1102M1388 455H1393M1518 455H1522M1272 487H1286M1333 487H1346"/>
              <path class="opening solid" d="M815 370V360H822V370M1127 368V357H1134V368M866 428V440M862 442H870M1178 442H1186V450H1178M815 562V550H822V562M929 560V558H940V562M1114 562V557H1125V562M1234 562V556H1242V562"/>
              <g class="lbl">
                <text x="808" y="274">1</text><text x="870" y="274">2</text><text x="930" y="274">3</text><text x="982" y="274">6</text><text x="1029" y="274">8</text><text x="1076" y="274">10</text><text x="1128" y="274">12</text><text x="1187" y="274">13</text><text x="1249" y="274">14</text><text x="1309" y="274">15</text><text x="1369" y="274">16</text><text x="1421" y="274">18</text><text x="1465" y="274">20</text><text x="1513" y="274">22</text>
                <text x="709" y="374">H</text><text x="709" y="402">G</text><text x="709" y="446">F</text><text x="709" y="463">E</text><text x="709" y="491">D</text><text x="709" y="569">C</text>
                <text x="1785" y="374">H</text><text x="1785" y="402">G</text><text x="1785" y="446">F</text><text x="1785" y="463">E</text><text x="1785" y="491">D</text><text x="1785" y="569">C</text><text x="1785" y="625">B</text><text x="1785" y="664">A</text>
              </g>
              <g class="dims">
                <text x="1249" y="318">47200</text>
                <text x="842" y="346">3300</text><text x="902" y="346">3200</text><text x="958" y="346">2800</text><text x="1054" y="346">2400</text><text x="1103" y="346">2800</text><text x="1159" y="346">3200</text><text x="1218" y="346">3300</text><text x="1280" y="346">3300</text><text x="1340" y="346">3200</text><text x="1396" y="346">2800</text><text x="1444" y="346">2400</text><text x="1541" y="346">2800</text><text x="1597" y="346">3200</text><text x="1657" y="346">3300</text>
                <text class="olive" x="1008" y="346">2600</text><text class="olive" x="1491" y="346">2600</text>
                <text x="820" y="367">300</text><text x="1131" y="362">325</text><text x="1240" y="377">600</text><text x="820" y="556">300</text><text x="935" y="560">550</text><text x="1120" y="559">550</text><text x="1238" y="556">450</text>
                <g transform="translate(786 0)"><text transform="translate(0 377) rotate(-90)">1500</text><text transform="translate(0 414) rotate(-90)">2400</text><text transform="translate(0 446) rotate(-90)">500</text><text transform="translate(0 467) rotate(-90)">1500</text><text transform="translate(0 521) rotate(-90)">4200</text></g>
                <g transform="translate(1717 0)"><text transform="translate(0 377) rotate(-90)">1500</text><text transform="translate(0 414) rotate(-90)">2400</text><text transform="translate(0 446) rotate(-90)">500</text><text transform="translate(0 467) rotate(-90)">1500</text><text transform="translate(0 521) rotate(-90)">4200</text></g>
                <text transform="translate(758 508) rotate(-90)">15600</text><text transform="translate(1745 508) rotate(-90)">15600</text>
                <text transform="translate(867 432) rotate(-90)">700</text><text transform="translate(867 444) rotate(-90)">300</text><text transform="translate(1178 445) rotate(-90)">400</text>
              </g>
              <!-- coordinate origin -->
              <path d="M686 840V790" stroke="#0f0" stroke-width="5"/><path d="M681 793l5-15 5 15z" fill="#0f0"/>
              <path d="M688 840H704" stroke="#f00" stroke-width="5"/><circle cx="686" cy="840" r="5" fill="#0080ff"/>
              <path d="M669 835H680L669 847H680" stroke="#1466d0" stroke-width="1.500" fill="none"/>
            </svg>
            <p class="tip">按鼠标左键选择图元，或拉框选择，按右键中止或ESC键取消</p>
          </div>
        </div>
        <div class="tb offset-bar">
          <i class="grip"></i>
          <select class="combo w70" aria-label="偏移方式" disabled><option>不偏移</option></select>
          <i class="sep"></i>
          <span class="dim-text">X=</span>
        </div>
      </main>
    </div>

    <footer class="status">
      <span class="s1">38889 Y=22480</span><span class="s2">层高:4.2m</span><span class="s3">建筑底标高:0m</span><span class="s4">216</span>
    </footer>

    <div class="taskbar">
      <a href="#" aria-label="开始"><svg viewBox="0 0 30 30"><path d="M5 9l8-1v8H5zM14 8l11-2v10H14zM5 17h8v8l-8-1zM14 17h11v10l-11-2z" fill="#fff"/></svg></a>
      <a href="#" aria-label="搜索"><svg viewBox="0 0 30 30"><circle cx="13" cy="15" r="8" fill="none" stroke="#fff" stroke-width="3"/></svg></a>
      <a href="#" aria-label="文件资源管理器"><svg viewBox="0 0 30 30"><path d="M2 3h12l2 3h12v24H2z" fill="#fbd87c"/><path d="M4 3h8v3H4z" fill="#fff0b8"/><path d="M6 19q0-2 2-2h14q2 0 2 2v11H6z" fill="#3ca7dc"/></svg></a>
      <a href="#" aria-label="应用商店"><svg viewBox="0 0 30 30"><path d="M9 9q0-8 6-8t6 8" fill="none" stroke="#fff" stroke-width="2"/><path d="M0 9h30v21H0z" fill="#fff"/><path d="M8 13h6v7H8z" fill="#f25022"/><path d="M16 13h6v7h-6z" fill="#7fba00"/><path d="M8 22h6v7H8z" fill="#00a4ef"/><path d="M16 22h6v7h-6z" fill="#ffb900"/></svg></a>
      <a href="#" aria-label="浏览器"><svg viewBox="0 0 30 30"><circle cx="15" cy="15" r="13" fill="#66c937"/><path d="M7 15q1-8 9-8 7 0 8 8z" fill="#fff"/><path d="M11 12q2-3 8 0z" fill="#2c8a1a"/><path d="M3 12Q14 0 28 1q0 3-3 6" stroke="#66c937" stroke-width="2" fill="none"/></svg></a>
      <a href="#" aria-label="邮件"><svg viewBox="0 0 30 30"><path d="M0 11L15 2l15 9v19H0z" fill="#fff"/><path d="M0 11l16 8 14-7-12 3 4 6z" fill="#111"/></svg></a>
      <a href="#" aria-label="电源工具"><svg viewBox="0 0 30 30"><rect width="30" height="34" rx="3" fill="#d8402b" stroke="#e9a69b"/><circle cx="15" cy="16" r="9" fill="none" stroke="#fff" stroke-width="2"/><path d="M15 9v14" stroke="#fff" stroke-width="3"/></svg></a>
      <a href="#" aria-label="造价助手"><svg viewBox="0 0 30 30"><rect width="30" height="34" rx="5" fill="#0a8cf5"/><path d="M20 7q-5-3-5 3v14M6 15q0 5 9 4 9 1 10-5M15 13h6" stroke="#fff" stroke-width="2.500" fill="none"/></svg></a>
      <a href="#" aria-label="微信"><svg viewBox="0 0 30 30"><ellipse cx="11" cy="13" rx="11" ry="10" fill="#5ac63c"/><circle cx="8" cy="9" r="1.500" fill="#1b5e12"/><circle cx="15" cy="9" r="1.500" fill="#1b5e12"/><ellipse cx="21" cy="20" rx="9" ry="8" fill="#f3f3f3"/><circle cx="18" cy="18" r="1.300" fill="#555"/><circle cx="24" cy="18" r="1.300" fill="#555"/></svg></a>
      <a href="#" class="yu">预</a>
      <a href="#" class="cad">CAD</a>
      <a href="#" aria-label="照片"><svg viewBox="0 0 30 30"><path d="M0 0h30v30H0z" fill="#6d4a58"/><path d="M4 12q4-8 10-5l4 4v10H4z" fill="#e7b8a8"/></svg></a>
      <div class="tray"><svg class="ime" viewBox="0 0 16 18"><path d="M1.500 6h13v7h-13zM8 1v17" fill="none" stroke="#fff"/></svg><span class="clock">14:43</span></div>
    </div>

    <!-- quantities window -->
    <section class="dialog">
      <div class="dlg-title">
        <svg class="logo" viewBox="0 0 20 20"><rect width="20" height="20" rx="4" fill="#2fc06c"/><path d="M6 4v12M6 10h9M15 8v5M5 5h3M5 15h3" stroke="#fff" stroke-width="2" fill="none"/></svg>
        <h1>查看构件图元工程量</h1>
        <button aria-label="最小化"><svg viewBox="0 0 12 12"><path d="M0 6.500h12"/></svg></button>
        <button aria-label="最大化"><svg viewBox="0 0 12 12"><path d="M.5.5h11v11H.5z"/></svg></button>
        <button aria-label="关闭窗口"><svg viewBox="0 0 12 12"><path d="M0 0l12 12M12 0L0 12"/></svg></button>
      </div>
      <div class="tabs"><button class="active">构件工程量</button><button>做法工程量</button></div>
      <div class="filters">
        <label><input type="radio" name="kind" checked>清单工程量</label>
        <label><input type="radio" name="kind">定额工程量</label>
        <i class="sep"></i>
        <label><input type="checkbox" checked>显示房间、组合构件量</label>
        <i class="sep"></i>
        <label class="pick">过滤构件类型：<select class="combo w157"><option>墙</option></select></label>
        <i class="sep"></i>
        <label class="off"><input type="checkbox" checked disabled>只显示标准层单层量</label>
      </div>
      <div class="grid-box">
        <table class="qty">
          <colgroup><col class="c-no"><col class="c-name"><col class="c-n"><col class="c-n"><col class="c-n"><col class="c-n"><col class="c-wo"><col class="c-wi"><col class="c-in"><col class="c-last"></colgroup>
          <thead>
            <tr><th></th><th class="cond">分类条件</th><th colspan="8" class="group">工程量名称</th></tr>
            <tr><th></th><th class="mid-th">名称</th><th>长度(m)</th><th>墙高(m)</th><th>墙厚(m)</th><th>体积(m3)</th><th>外墙外侧钢丝</th><th>外墙内侧钢丝</th><th>内墙两侧钢丝</th><th>大钢模板面积(m2)</th></tr>
          </thead>
          <tbody>
            <tr class="cur"><th>1</th><td>厨卫、电梯四周-200</td><td>21.2</td><td>75.6</td><td>3.6</td><td>15.566</td><td>0</td><td>0</td><td>222.6</td><td>0</td></tr>
            <tr><th>2</th><td>厨卫、电梯四周-200</td><td>20.85</td><td>33.6</td><td>1.6</td><td>12.09</td><td>100.5</td><td>21.3</td><td>0</td><td>0</td></tr>
            <tr><th>3</th><td>剪力墙-200</td><td>127.22</td><td>466.2</td><td>22.2</td><td>102.3951</td><td>0</td><td>0</td><td>0</td><td>1068.648</td></tr>
            <tr><th>4</th><td>楼梯隔墙</td><td>10</td><td>7.8257</td><td>0.4</td><td>1.1209</td><td>0</td><td>0</td><td>2.5</td><td>0</td></tr>
            <tr><th>5</th><td>其他-200</td><td>14.2</td><td>29.4</td><td>1.4</td><td>9.494</td><td>0</td><td>0</td><td>118.5</td><td>0</td></tr>
            <tr><th>6</th><td>其他-200-外</td><td>172.5719</td><td>255.9</td><td>13.6</td><td>78.8607</td><td>631.7578</td><td>161.2527</td><td>0</td><td>0</td></tr>
            <tr class="sub"><th>7</th><td>小计</td><td>366.0419</td><td>868.5257</td><td>42.8</td><td>219.5267</td><td>732.2578</td><td>182.5527</td><td>343.6</td><td>1068.648</td></tr>
            <tr class="total"><th>8</th><td>总计</td><td>366.0419</td><td>868.5257</td><td>42.8</td><td>219.5267</td><td>732.2578</td><td>182.5527</td><td>343.6</td><td>1068.648</td></tr>
          </tbody>
        </table>
      </div>
    </section>

    <!-- hand-drawn marks -->
    <svg class="marks" viewBox="0 0 1810 1004" preserveAspectRatio="xMinYMin meet">
      <g fill="none" stroke="#f41cf4" stroke-width="7">
        <ellipse cx="518" cy="32" rx="60" ry="23"/>
        <ellipse cx="82" cy="200" rx="40" ry="24"/>
        <ellipse cx="367" cy="222" rx="105" ry="88" stroke-width="6"/>
        <ellipse cx="1390" cy="705" rx="176" ry="31"/>
        <rect x="1255" y="880" width="297" height="50"/>
      </g>
      <g fill="#fc3a38">
        <path d="M113 179L294 139 293 132 311 137 299 148 296 145 113 180z"/>
        <path d="M391 138L520 68 517 63 536 61 527 76 524 72 392 139z"/>
        <path d="M545 51L1187 666 1194 662 1197 682 1177 677 1180 673 545 53z"/>
      </g>
    </svg>
  </div>
</body>
</html>
```
FILE: styles.css
```css
* {
  box-sizing: border-box;
}
body {
  margin: 0;
  background: #f0f0f0;
  color: #000;
  font: 15px/20px "Noto Sans CJK SC", "Noto Sans", sans-serif;
  overflow: hidden;
}
button, input, select {
  font: inherit;
  color: inherit;
}
button {
  border: 0;
  padding: 0;
  background: none;
}
.sprite {
  position: absolute;
  width: 0;
  height: 0;
}
.app {
  position: relative;
  display: flex;
  flex-direction: column;
  height: 100vh;
  padding-top: 6px;
  overflow: hidden;
}
.ic {
  width: 20px;
  height: 20px;
  flex: none;
}
.caret {
  width: 9px;
  height: 6px;
  margin: 0 -3px 0 -2px;
  color: #222;
}
.caret.sm {
  width: 7px;
  height: 5px;
}
.dim-caret {
  color: #777;
}

/* toolbars */
.topbar {
  display: flex;
  flex: none;
  height: 37px;
  background: #fff;
  border-top: 1px solid #d0d0d0;
  border-bottom: 1px solid #d0d0d0;
}
.tb {
  display: flex;
  align-items: center;
  gap: 1px;
  padding-right: 3px;
  border-right: 1px solid #ccc;
  white-space: nowrap;
}
.tb button {
  display: flex;
  align-items: center;
  gap: 5px;
  height: 28px;
  padding: 0 4px;
}
.tb button.on {
  background: #c2e0f8;
  outline: 1px solid #9accf5;
  outline-offset: -1px;
}
.tb button:disabled, .vbar button:disabled {
  color: #8a8a8a;
}
.quick {
  width: 172px;
  margin-right: 16px;
  padding: 0;
  overflow: hidden;
}
.tb.quick .mini {
  gap: 6px;
  padding: 0 6px 0 2px;
}
.tb.quick .mini:first-child {
  margin-left: -6px;
  padding-right: 9px;
}
.sep {
  width: 1px;
  height: 26px;
  margin: 0 2px;
  background: #8c8c8c;
}
.grip {
  width: 4px;
  height: 28px;
  margin: 0 2px;
  background: radial-gradient(circle at 2px 2px, #aaa 1px, transparent 2px) 0 0 / 4px 5px;
}
.combo {
  appearance: none;
  height: 26px;
  margin: 0 2px;
  padding: 0 18px 2px 3px;
  border: 0;
  border-radius: 0;
  background: url("data:image/svg+xml,%3Csvg xmlns='http://www.w3.org/2000/svg' width='16' height='26'%3E%3Cpath d='M.5.5h15v25H.5z' fill='%23e1e1e1' stroke='%23adadad'/%3E%3Cpath d='M4 11l4 4 4-4' fill='none' stroke='%23444' stroke-width='1.500'/%3E%3C/svg%3E") right center no-repeat #fff;
  overflow: hidden;
}
.combo:disabled {
  background-color: #f4f4f4;
  color: #777;
  opacity: 1;
}
.w70 { width: 70px; }
.w86 { width: 86px; }
.w98 { width: 98px; }
.w157 { width: 157px; }

/* side panels */
.work {
  display: flex;
  flex: 1;
  min-height: 0;
}
.panel-title {
  display: flex;
  align-items: center;
  flex: none;
  height: 19px;
  margin-top: 2px;
  border: 1px solid #9a9a9a;
  background: #eee;
  font-size: 16px;
  line-height: 16px;
}
.panel-title button {
  width: 12px;
  height: 12px;
  margin-right: 11px;
  line-height: 0;
}
.panel-title button:first-of-type {
  margin-left: auto;
}
.panel-title button:last-of-type {
  margin-right: 4px;
}
.panel-title svg {
  width: 12px;
  height: 12px;
}
.nav {
  display: flex;
  flex-direction: column;
  flex: none;
  width: 250px;
  margin-left: -18px;
  padding-bottom: 2px;
}
.nav .panel-title {
  padding-left: 14px;
}
.bar-btn {
  flex: none;
  height: 27px;
  border: 1px solid #a8a8a8;
  border-top-color: #fff;
  background: #efefef;
}
.bar-btn.first {
  margin-top: 2px;
  border-top-color: #a8a8a8;
}
.nav-body {
  flex: 1;
  border: solid #9a9ca3;
  border-width: 1px 2px 2px 1px;
  background: #fff;
}
.nav-tools {
  display: flex;
  gap: 10px;
  height: 34px;
  padding: 8px 0 0 8px;
  border-bottom: 2px solid #9a9ca3;
}
.nav-tools button {
  width: 20px;
  height: 18px;
  background: #dce4f8;
  outline: 1px solid #c5cff0;
  line-height: 0;
}
.nav-tools path {
  stroke: #2b80c0;
  stroke-width: 2;
}
.tree, .tree ul {
  margin: 0;
  padding: 0;
  list-style: none;
}
.tree {
  padding-top: 3px;
}
.tree a {
  display: flex;
  align-items: center;
  height: 20px;
  padding-left: 11px;
  color: #000;
  text-decoration: none;
}
.chev {
  width: 10px;
  height: 10px;
  fill: none;
  stroke: #999;
  stroke-width: 2;
}
.chev.open {
  stroke: #333;
}
.fold {
  width: 29px;
  height: 16px;
  margin-right: 5px;
  padding-left: 5px;
  margin-left: 2px;
}
.tree ul {
  margin-left: 18px;
  border-left: 1px dotted #999;
}
.tree ul li {
  margin-left: 23px;
  border-left: 1px dotted #999;
}
.tree ul li:last-child {
  border-image: linear-gradient(#999 50%, transparent 50%) 1;
}
.tree ul a {
  padding-left: 0;
}
.tree ul a::before {
  content: "";
  width: 10px;
  margin-right: 4px;
  border-top: 1px dotted #999;
}
.brick {
  width: 18px;
  height: 18px;
  margin-right: 3px;
}
.tree ul span {
  padding: 0 4px 0 3px;
  line-height: 18px;
}
.tree .sel {
  background: #d9d9d9;
}

.mid {
  display: flex;
  flex-direction: column;
  flex: none;
  width: 341px;
  margin: 0 3px 0 6px;
  padding-bottom: 1px;
}
.comp-tools {
  display: flex;
  align-items: center;
  gap: 6px;
  height: 35px;
  padding-left: 6px;
  background: #fbfbfb;
}
.comp-tools button {
  display: flex;
  align-items: center;
  gap: 5px;
  padding-right: 4px;
}
.search {
  display: flex;
  align-items: center;
  gap: 5px;
  height: 33px;
  padding-left: 1px;
}
.search input {
  width: 309px;
  height: 30px;
  padding: 0 3px 4px;
  border: 2px solid #8c8c8c;
  background: #fff;
}
.search input::placeholder {
  color: #777;
}
.comp-box, .prop-box {
  margin-left: 1px;
  border: 2px solid #a3a4aa;
  background: #fff;
}
.comp-box {
  flex: none;
  height: 343px;
}
table {
  border-collapse: collapse;
  table-layout: fixed;
}
.comp {
  width: 334px;
}
.comp th, .comp td, .props th, .props td {
  padding: 0;
  border: 1px solid #bdbdbd;
  border-left: 0;
  font-weight: normal;
  white-space: nowrap;
  overflow: hidden;
}
.comp tr {
  height: 24px;
}
.comp thead tr {
  height: 26px;
}
.comp tbody tr:nth-child(6n) {
  height: 23px;
}
.comp th:first-child {
  width: 33px;
  background: #f1f1f1;
}
.comp td {
  padding-left: 24px;
  line-height: 20px;
}
.comp .cur th {
  background: #fdd083;
  color: #6a0a50;
}
.comp .cur td, .props .hl {
  background: #d8e9f7;
}
th.gold {
  background: linear-gradient(#f9d594, #f0bd5c);
  color: #6a0a50;
}
.panel-title.second {
  margin-top: 8px;
}
.prop-box {
  display: flex;
  flex: 1;
  min-height: 0;
  margin-top: 3px;
  overflow: hidden;
}
.props {
  width: 223px;
  align-self: flex-start;
}
.props tr {
  height: 26px;
}
.props tbody tr:nth-child(4n) {
  height: 27px;
}
.props th {
  width: 100px;
  padding-left: 25px;
  color: #0a0af0;
  text-align: left;
}
.props thead th {
  padding-left: 3px;
  background: #f1f1f1;
  color: #000;
}
.props thead th.gold {
  width: 118px;
  background: linear-gradient(#f9d594, #f0bd5c);
  color: #6a0a50;
}
.props .blk th {
  color: #000;
}
.props td {
  padding-left: 2px;
}
.scroll {
  display: flex;
  flex-direction: column;
  align-items: center;
  width: 19px;
  margin-left: auto;
  margin-right: 2px;
  background: #f0f0f0;
}
.scroll svg {
  width: 10px;
  height: 10px;
  margin: 6px 0;
  fill: none;
  stroke: #444;
  stroke-width: 2;
}
.scroll svg:last-child {
  margin-top: auto;
}
.thumb {
  width: 100%;
  height: 56%;
  background: #cdcdcd;
}

/* drawing area */
.right {
  display: flex;
  flex: 1;
  flex-direction: column;
  min-width: 0;
}
.bars {
  display: flex;
  flex: none;
  height: 37px;
  padding-left: 1px;
  border-bottom: 1px solid #d0d0d0;
}
.apart {
  margin-left: 10px;
  border-left: 1px solid #fff;
}
.stage {
  display: flex;
  flex: 1;
  min-height: 0;
}
.vbar {
  display: flex;
  flex-direction: column;
  align-items: center;
  flex: none;
  width: 35px;
  padding-top: 3px;
  border-left: 1px solid #fff;
}
.vbar button {
  display: flex;
  flex-direction: column;
  align-items: center;
  gap: 4px;
  flex: none;
  padding: 4px 0;
}
.vbar span {
  width: 15px;
  line-height: 15px;
}
.hsep {
  flex: none;
  width: 24px;
  height: 1px;
  margin: 3px 0 4px;
  background: #8c8c8c;
}
.grip-h {
  flex: none;
  width: 28px;
  height: 4px;
  background: radial-gradient(circle at 2px 2px, #aaa 1px, transparent 2px) 0 0 / 5px 4px;
}
.tri {
  border: 4px solid transparent;
  border-left: 0;
  border-right-color: #111;
}
.more {
  width: 8px;
  height: 12px;
  margin: auto 0 3px 14px;
  fill: none;
  stroke: #000;
  stroke-width: 2;
}
.canvas {
  position: relative;
  flex: 1;
  min-width: 0;
  background: #000;
  overflow: hidden;
}
.plan {
  display: block;
  width: 100%;
  height: 100%;
}
.axis { stroke: #007a00; fill: none; stroke-width: 1.500; }
.stair { fill: #8080c0; }
.wall { stroke: #0f68dc; stroke-width: 5; fill: none; }
.thin-wall { stroke: #0c5fc8; stroke-width: 2; fill: none; }
.curtain { stroke: #0080ff; stroke-width: 4; }
.curtain.thick { stroke-width: 6; }
.ref { stroke: #ff0000; stroke-width: 1; shape-rendering: crispEdges; }
.ref.dark { stroke: #d00000; }
.opening { stroke: #e8e8e8; stroke-width: 1.500; stroke-dasharray: 5 3; fill: none; }
.opening.solid { stroke-dasharray: none; stroke-width: 1; }
.lbl, .dims {
  fill: #c8c8c8;
  font: 18px Roboto, "Liberation Sans", sans-serif;
  text-anchor: middle;
}
.lbl {
  fill: #d8d8d8;
  font-weight: 500;
}
.olive {
  fill: #8c8a62;
}
.tip {
  position: absolute;
  top: 136px;
  right: 29px;
  width: 238px;
  margin: 0;
  padding: 2px 4px;
  border: 1px solid #55556a;
  background: #1a1358;
  color: #85837e;
  line-height: 17px;
  word-break: break-all;
  line-break: anywhere;
}
.offset-bar {
  flex: none;
  height: 37px;
  padding-left: 1px;
  border-right: 0;
}
.dim-text {
  margin-left: 2px;
  color: #777;
}

/* status and task bar */
.status {
  display: flex;
  flex: none;
  height: 28px;
  border-top: 1px solid #d0d0d0;
  line-height: 26px;
}
.status span {
  border-right: 1px solid #ccc;
  white-space: nowrap;
}
.status span + span {
  padding-left: 1px;
}
.s1 { width: 170px; }
.s2 { width: 100px; }
.s3 { width: 162px; }
.s4 { width: 62px; }
.taskbar {
  display: flex;
  flex: none;
  height: 30px;
  padding-top: 9px;
  background: #101010;
  overflow: hidden;
}
.taskbar a {
  flex: none;
  width: 30px;
  height: 30px;
  margin-right: 32px;
  color: #fff;
  text-decoration: none;
}
.taskbar a:first-child {
  margin-left: -3px;
}
.taskbar svg {
  width: 30px;
  height: 30px;
}
.taskbar .yu, .taskbar .cad {
  margin-top: 1px;
  border-radius: 5px;
  background: #6db1e0;
  font-size: 22px;
  font-weight: bold;
  line-height: 30px;
  text-align: center;
}
.taskbar .cad {
  border: 2px solid #b9bfc6;
  background: #1272d4;
  font: 12px/28px "Liberation Sans", sans-serif;
}
.tray {
  display: flex;
  gap: 33px;
  margin: -5px 2px 0 auto;
  color: #fff;
}
.tray .ime {
  width: 16px;
  height: 18px;
  margin-top: 11px;
}

/* dialog */
.dialog {
  position: absolute;
  top: 569px;
  bottom: -2px;
  left: 703px;
  width: 1016px;
  padding: 0 4px 0 3px;
  border: 1px solid #1b83d6;
  background: #fff;
  box-shadow: 0 0 10px rgba(0, 0, 0, 0.3);
}
.dlg-title {
  display: flex;
  align-items: center;
  height: 38px;
  padding: 0 20px 0 6px;
}
.dlg-title h1 {
  margin: 0 auto 0 5px;
  font-size: 15px;
  font-weight: normal;
}
.logo {
  width: 20px;
  height: 20px;
}
.dlg-title button {
  width: 12px;
  height: 12px;
  margin-left: 47px;
  line-height: 0;
}
.dlg-title button svg {
  width: 12px;
  height: 12px;
  fill: none;
  stroke: #000;
  overflow: visible;
}
.tabs {
  display: flex;
  align-items: flex-end;
  height: 26px;
  margin-right: -4px;
  background: #f0f0f0;
  border-bottom: 1px solid #dcdcdc;
}
.tabs button {
  height: 24px;
  padding: 0 6px 0 4px;
  border: 1px solid #dcdcdc;
  border-bottom: 0;
}
.tabs .active {
  height: 27px;
  margin-bottom: -1px;
  padding: 0 9px 2px 6px;
  background: #fff;
}
.filters {
  display: flex;
  align-items: center;
  height: 38px;
  padding: 3px 0 0 2px;
  white-space: nowrap;
}
.filters label {
  display: flex;
  align-items: center;
}
.filters input {
  appearance: none;
  width: 16px;
  height: 16px;
  margin: 0 9px 0 0;
  border: 1px solid #444;
  background: #fff;
}
.filters input[type="radio"] {
  border-radius: 50%;
}
.filters input[type="radio"]:checked {
  background: radial-gradient(#333 4px, #fff 5px);
}
.filters input[type="checkbox"]:checked {
  margin-right: 10px;
  background: url("data:image/svg+xml,%3Csvg xmlns='http://www.w3.org/2000/svg' width='14' height='14'%3E%3Cpath d='M2 7l3 4 7-9' fill='none' stroke='%23444' stroke-width='1.500'/%3E%3C/svg%3E") center no-repeat;
}
.filters .off {
  color: #a0a0a0;
}
.filters .off input {
  opacity: 0.4;
}
.filters .sep {
  margin: 0 4px;
}
.filters label + .sep {
  margin-left: 12px;
}
.filters .pick + .sep {
  margin-left: 2px;
}
.filters .combo {
  border: 1px solid #888;
}
.grid-box {
  height: 100%;
  margin: 0 3px 0 4px;
  border: 1px solid #9a9a9a;
}
.qty {
  width: 958px;
}
.c-no { width: 45px; }
.c-name { width: 148px; }
.c-n { width: 81px; }
.c-wo { width: 110px; }
.c-wi { width: 103px; }
.c-in { width: 101px; }
.c-last { width: 127px; }
.qty tr {
  height: 24px;
}
.qty thead tr:first-child, .qty tbody tr:nth-child(8n + 2) {
  height: 23px;
}
.qty th, .qty td {
  padding: 0 3px;
  border: 1px solid #000090;
  line-height: 20px;
  white-space: nowrap;
  overflow: hidden;
}
.qty th {
  padding: 0 1px;
  border-color: #bcc4c8;
  background: #749fd1;
  color: #fff;
  font-weight: normal;
  text-align: left;
}
.qty .cond {
  padding-left: 10px;
  color: #b050b0;
}
.qty .group, .qty .mid-th, .qty tbody th {
  text-align: center;
}
.qty tbody th {
  color: #000;
}
.qty .cur th {
  color: #6a0a50;
}
.qty td {
  padding-top: 1px;
  font-family: "Liberation Mono", monospace;
  font-size: 13px;
  text-align: right;
}
.qty td:nth-child(2) {
  padding-top: 0;
  font: 15px/20px "Noto Sans CJK SC", sans-serif;
  text-align: center;
}
.sub td { background: #fffde0; }
.qty .sub td:nth-child(2) { background: #a3caf0; }
.total td { background: #7affff; }
.qty .total td:nth-child(2) {
  padding-left: 24px;
  text-align: left;
}

.marks {
  position: absolute;
  top: 0;
  left: 0;
  width: 100%;
  height: 100%;
  pointer-events: none;
}
```
